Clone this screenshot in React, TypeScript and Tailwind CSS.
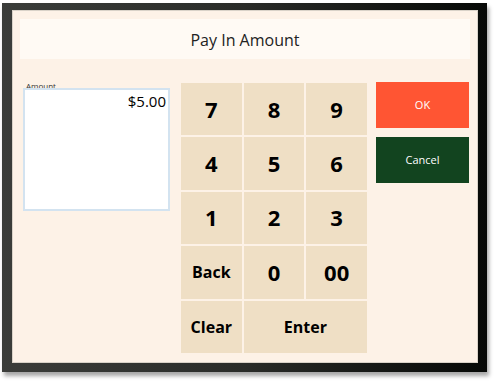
import React from "react";

const keys: { label: string; big: boolean; span?: boolean }[] = [
  { label: "7", big: true },
  { label: "8", big: true },
  { label: "9", big: true },
  { label: "4", big: true },
  { label: "5", big: true },
  { label: "6", big: true },
  { label: "1", big: true },
  { label: "2", big: true },
  { label: "3", big: true },
  { label: "Back", big: false },
  { label: "0", big: true },
  { label: "00", big: true },
  { label: "Clear", big: false },
  { label: "Enter", big: false, span: true },
];

export default function App() {
  return (
    <div
      className="w-[495px] h-[386px] bg-white overflow-hidden"
      style={{ fontFamily: '"Open Sans", "Noto Sans", sans-serif' }}
    >
      <div className="ml-[2px] mt-[3px] w-[485px] h-[369px] bg-gradient-to-r from-[#3b3d3a] via-[#2a2c29] to-[#070907] pl-[10px] pt-[7px] shadow-[2px_4px_4px_rgba(0,0,0,0.35)]">
        <div className="w-[466px] h-[353px] bg-[#fdf2e7] border border-[#d9d2c8] px-[7px] pt-[8px] flex flex-col">
          <div className="h-[40px] bg-[#fffaf4] flex items-center justify-center text-[16px] leading-[20px] pt-[2px] text-[#222]">
            Pay In Amount
          </div>
          <div className="flex mt-[24px]">
            <div className="w-[148px] ml-[3px] flex flex-col">
              <div className="text-[8px] leading-[8px] text-[#333] ml-[3px] -mt-[1px]">Amount</div>
              <div className="mt-[-2px] w-[147px] h-[123px] bg-white border-2 border-[#d3e3f0] flex justify-end px-[2px] pt-[2px] text-[15px] leading-[18px] text-black">
                $5.00
              </div>
            </div>
            <div className="ml-[10px] w-[186px] h-[270px] grid grid-cols-3 grid-rows-5 gap-[2px]">
              {keys.map((k) => (
                <div
                  key={k.label}
                  className={
                    "bg-[#efdfc5] flex items-center justify-center font-bold text-black " +
                    (k.big ? "text-[22px] " : "text-[16px] ") +
                    (k.span ? "col-span-2" : "")
                  }
                >
                  {k.label}
                </div>
              ))}
            </div>
            <div className="ml-[9px] w-[93px] flex flex-col -mt-[1px]">
              <div className="h-[46px] bg-[#ff5533] text-white text-[11px] flex items-center justify-center">
                OK
              </div>
              <div className="mt-[9px] h-[46px] bg-[#12441f] text-white text-[11px] flex items-center justify-center">
                Cancel
              </div>
            </div>
          </div>
        </div>
      </div>
    </div>
  );
}
